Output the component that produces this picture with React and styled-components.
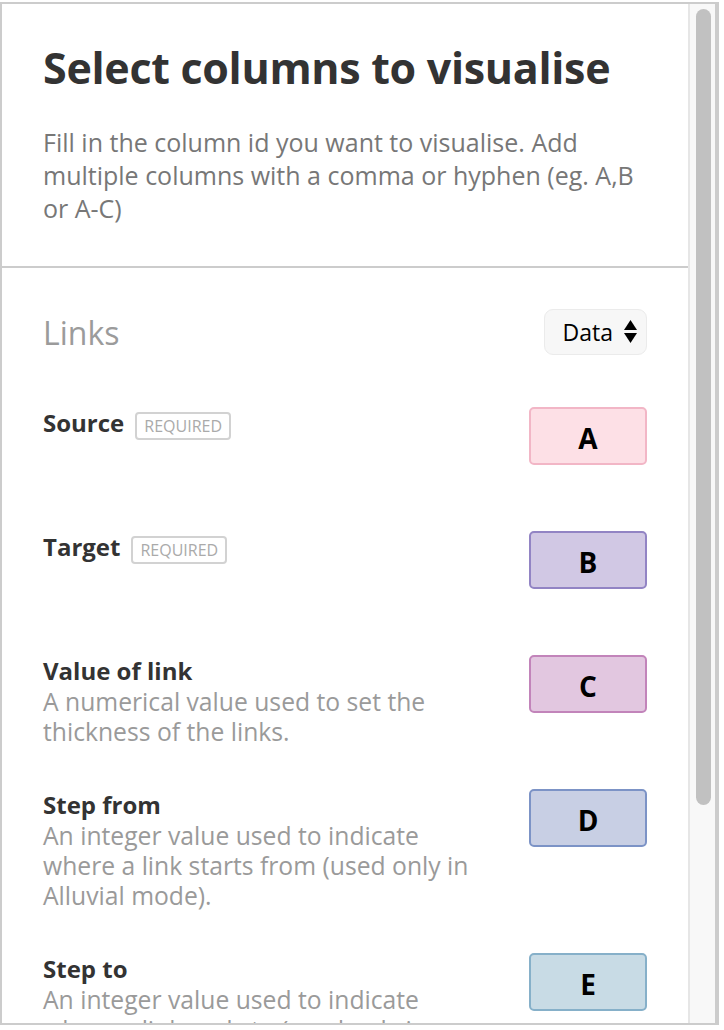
import styled, { createGlobalStyle } from "styled-components";

const GlobalStyle = createGlobalStyle`
    body {
        margin: 0;
        background: #fff;
        font-family: "Open Sans", Lato, sans-serif;
    }
`;

const Frame = styled.div`
    display: flex;
    margin-top: 2px;
    width: 719px;
    height: 1023px;
    box-sizing: border-box;
    border: 2px solid #ccc;
    border-right-width: 4px;
`;

const Content = styled.div`
    flex: 1;
    min-width: 0;
    overflow: hidden;
`;

const ScrollTrack = styled.div`
    flex-shrink: 0;
    width: 27px;
    box-sizing: border-box;
    padding: 5px 4px 0 6px;
    background: #f8f8f8;
    border-left: 2px solid #e6e6e6;
`;

const ScrollThumb = styled.div`
    height: 796px;
    border-radius: 8px;
    background: #c1c1c1;
`;

const Header = styled.div`
    padding: 40px 41px 41px;
    border-bottom: 2px solid #ccc;
`;

const Title = styled.h1`
    margin: 0;
    font-size: 43px;
    line-height: 48px;
    font-weight: 700;
    letter-spacing: -0.3px;
    color: #333;
`;

const Intro = styled.p`
    margin: 34px 0 0;
    font-size: 25px;
    line-height: 33px;
    color: #777;
`;

const Section = styled.div`
    padding: 41px 41px 40px;
`;

const SectionHead = styled.div`
    display: flex;
    align-items: center;
    justify-content: space-between;
    height: 46px;
    margin-bottom: 52px;
`;

const SectionTitle = styled.h2`
    margin: 0;
    font-size: 32px;
    font-weight: 400;
    color: #9b9b9b;
`;

const Select = styled.div`
    display: flex;
    align-items: center;
    gap: 11px;
    height: 46px;
    box-sizing: border-box;
    padding: 0 9px 0 18px;
    background: #f7f7f7;
    border: 1px solid #ebebeb;
    border-radius: 9px;
    font-size: 23px;
    color: #000;
`;

const Row = styled.div`
    display: flex;
    align-items: flex-start;
    justify-content: space-between;
    min-height: 82px;
    margin-bottom: 42px;
`;

const Info = styled.div`
    max-width: 470px;
`;

const Label = styled.div`
    font-size: 24px;
    line-height: 32px;
    font-weight: 700;
    color: #333;
`;

const Badge = styled.span`
    display: inline-block;
    margin-left: 11px;
    padding: 0 7px;
    border: 2px solid #d2d2d2;
    border-radius: 4px;
    font-size: 16px;
    line-height: 24px;
    font-weight: 400;
    color: #aaa;
    vertical-align: baseline;
`;

const Desc = styled.p`
    margin: 0;
    font-size: 24.7px;
    line-height: 30px;
    color: #9a9a9a;
    white-space: pre-line;
`;

const ColumnBox = styled.div`
    flex-shrink: 0;
    display: flex;
    align-items: center;
    justify-content: center;
    width: 118px;
    height: 58px;
    box-sizing: border-box;
    padding-top: 3px;
    background: ${(p) => p.$bg};
    border: 2px solid ${(p) => p.$border};
    border-radius: 5px;
    font-size: 28px;
    font-weight: 700;
    color: #000;
`;

const SortArrows = () => (
    <svg width="13" height="24" viewBox="0 0 13 24">
        <path d="M6.5 0 L13 10 L0 10 Z" fill="#000" />
        <path d="M0 13 L13 13 L6.5 23 Z" fill="#000" />
    </svg>
);

const dimensions = [
    { name: "Source", required: true, col: "A", bg: "#fde0e6", border: "#f2b6c6" },
    { name: "Target", required: true, col: "B", bg: "#d1c8e4", border: "#9284c4" },
    {
        name: "Value of link",
        desc: "A numerical value used to set the\nthickness of the links.",
        col: "C",
        bg: "#e2c7e0",
        border: "#c284ba",
    },
    {
        name: "Step from",
        desc: "An integer value used to indicate\nwhere a link starts from (used only in\nAlluvial mode).",
        col: "D",
        bg: "#c8cfe4",
        border: "#7c93c6",
    },
    {
        name: "Step to",
        desc: "An integer value used to indicate\nwhere a link ends to (used only in\nAlluvial mode).",
        col: "E",
        bg: "#c8dbe5",
        border: "#86b0c9",
    },
];

const App = () => {
    return (
        <>
            <GlobalStyle />
            <Frame>
                <Content>
                    <Header>
                        <Title>Select columns to visualise</Title>
                        <Intro>
                            Fill in the column id you want to visualise. Add
                            <br />
                            multiple columns with a comma or hyphen (eg. A,B
                            <br />
                            or A-C)
                        </Intro>
                    </Header>
                    <Section>
                        <SectionHead>
                            <SectionTitle>Links</SectionTitle>
                            <Select>
                                Data
                                <SortArrows />
                            </Select>
                        </SectionHead>
                        {dimensions.map((d) => (
                            <Row key={d.col}>
                                <Info>
                                    <Label>
                                        {d.name}
                                        {d.required && <Badge>REQUIRED</Badge>}
                                    </Label>
                                    {d.desc && <Desc>{d.desc}</Desc>}
                                </Info>
                                <ColumnBox $bg={d.bg} $border={d.border}>
                                    {d.col}
                                </ColumnBox>
                            </Row>
                        ))}
                    </Section>
                </Content>
                <ScrollTrack>
                    <ScrollThumb />
                </ScrollTrack>
            </Frame>
        </>
    );
};

export default App;
